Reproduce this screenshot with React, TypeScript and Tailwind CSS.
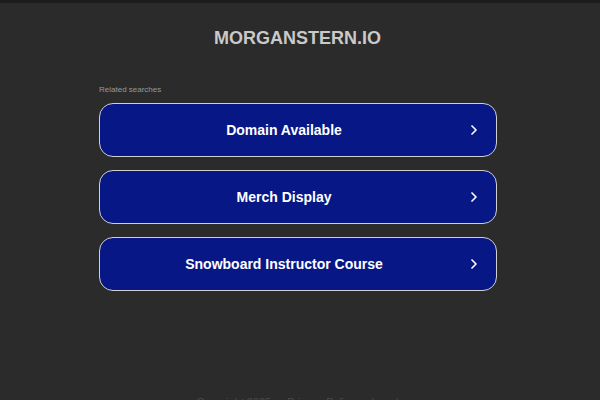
import { ChevronRight } from "lucide-react";

const searches = ["Domain Available", "Merch Display", "Snowboard Instructor Course"];

export default function App() {
  return (
    <div
      className="min-h-[400px] w-[600px] bg-[#2b2b2b] overflow-hidden"
      style={{ fontFamily: '"Liberation Sans", Arial, sans-serif' }}
    >
      <div className="h-[3px] bg-[#1c1c1c]" />
      <div className="pt-[24px] pr-[5px] text-center text-[18px] font-bold leading-[22px] text-[#c9c9c9]">
        MORGANSTERN.IO
      </div>
      <div className="ml-[99px] mt-[36px] w-[398px]">
        <div className="text-[8px] leading-[10px] text-[#9a9a9a]">Related searches</div>
        <div className="mt-[8px] flex flex-col gap-[13px]">
          {searches.map((s) => (
            <div
              key={s}
              className="flex h-[54px] items-center rounded-[14px] border-[1.5px] border-[#d0d0d0] bg-[#071786] pl-[16px] pr-[14px] text-[14px] font-bold text-white"
            >
              <span className="mr-[14px] flex-1 text-center">{s}</span>
              <ChevronRight className="h-[16px] w-[16px]" strokeWidth={2.5} />
            </div>
          ))}
        </div>
      </div>
      <div className="mt-[103px] pr-[5px] text-center text-[11px] text-[#4a4a4a]">
        Copyright 2025 &nbsp;·&nbsp; Privacy Policy &nbsp;·&nbsp; Legal
      </div>
    </div>
  );
}
